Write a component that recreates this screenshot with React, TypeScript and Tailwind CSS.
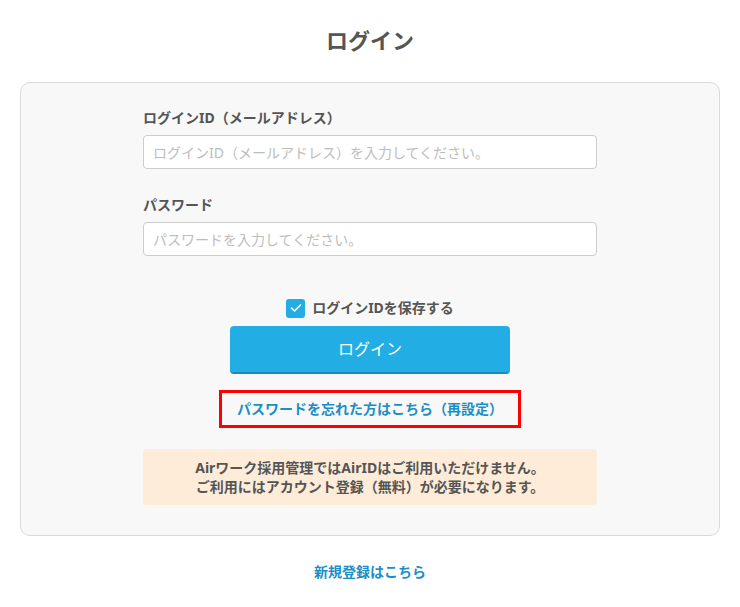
import React from "react";

const font = { fontFamily: '"Noto Sans", "Noto Sans CJK JP", sans-serif' };

export default function App() {
  return (
    <div className="w-[740px] min-h-[607px] bg-white text-[#555]" style={font}>
      <h1 className="pt-[25px] h-[55px] text-center text-[22px] leading-[30px] font-bold text-[#555]">
        ログイン
      </h1>
      <div className="mx-[20px] mt-[27px] rounded-[10px] border border-[#dadada] bg-[#f8f8f8] pt-[25px] pb-[30px]">
        <div className="w-[454px] mx-auto flex flex-col">
          <label className="text-[14px] leading-[20px] font-bold text-[#555]">
            ログインID（メールアドレス）
          </label>
          <input
            className="mt-[7px] h-[34px] w-full rounded-[4px] border border-[#cccccc] bg-white px-[9px] text-[14px] placeholder:text-[#bdbdbd] outline-none"
            placeholder="ログインID（メールアドレス）を入力してください。"
          />
          <label className="mt-[26px] text-[14px] leading-[20px] font-bold text-[#555]">
            パスワード
          </label>
          <input
            type="password"
            className="mt-[7px] h-[34px] w-full rounded-[4px] border border-[#cccccc] bg-white px-[9px] text-[14px] placeholder:text-[#bdbdbd] outline-none"
            placeholder="パスワードを入力してください。"
          />
          <div className="mt-[42px] flex items-center justify-center gap-[7px] h-[20px]">
            <span className="flex h-[19px] w-[19px] items-center justify-center rounded-[3px] bg-[#22aee5]">
              <svg width="12" height="10" viewBox="0 0 12 10" fill="none">
                <path d="M1.5 5.2 L4.6 8 L10.5 2" stroke="white" strokeWidth="1.6" strokeLinecap="round" strokeLinejoin="round" />
              </svg>
            </span>
            <span className="text-[14px] leading-[20px] font-bold text-[#555]">ログインIDを保存する</span>
          </div>
          <button className="mx-auto mt-[8px] h-[48px] w-[280px] rounded-[4px] bg-[#22aee5] border-b-[2px] border-[#1a8bb9] text-[16px] text-white">
            ログイン
          </button>
          <div className="mx-auto mt-[16px] flex h-[38px] w-[302px] items-center justify-center border-[3px] border-[#ff0000]">
            <span className="text-[14px] leading-[20px] font-bold text-[#1a8fc5]">
              パスワードを忘れた方はこちら（再設定）
            </span>
          </div>
          <div className="mt-[21px] flex h-[56px] flex-col items-center justify-center rounded-[4px] bg-[#feecd9] text-center text-[14px] leading-[19px] font-bold text-[#555]">
            <p>Airワーク採用管理ではAirIDはご利用いただけません。</p>
            <p>ご利用にはアカウント登録（無料）が必要になります。</p>
          </div>
        </div>
      </div>
      <div className="mt-[26px] text-center text-[14px] leading-[20px] font-bold text-[#1a8fc5]">
        新規登録はこちら
      </div>
    </div>
  );
}
